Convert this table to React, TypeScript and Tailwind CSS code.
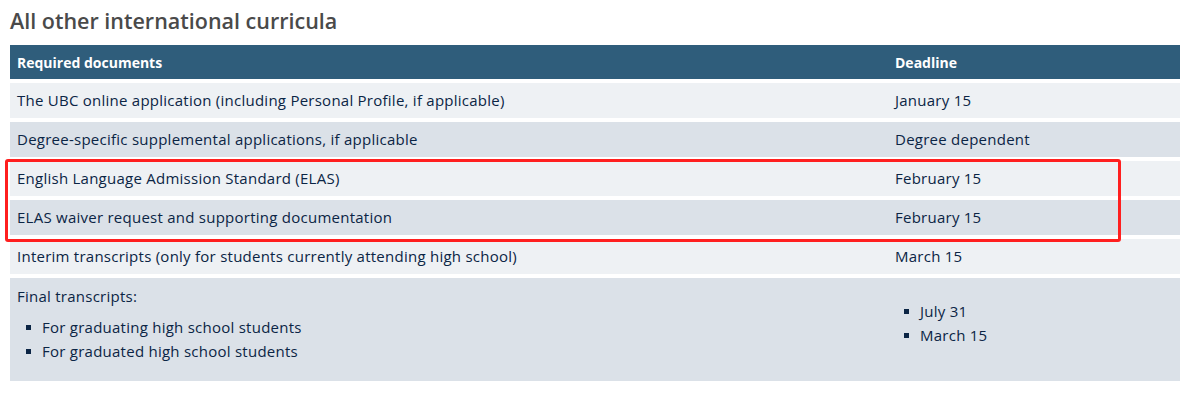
import React from "react";

const rows: { doc: string; deadline: string }[] = [
  { doc: "The UBC online application (including Personal Profile, if applicable)", deadline: "January 15" },
  { doc: "Degree-specific supplemental applications, if applicable", deadline: "Degree dependent" },
  { doc: "English Language Admission Standard (ELAS)", deadline: "February 15" },
  { doc: "ELAS waiver request and supporting documentation", deadline: "February 15" },
  { doc: "Interim transcripts (only for students currently attending high school)", deadline: "March 15" },
];

function Bullet({ children }: { children: React.ReactNode }) {
  return (
    <li className="flex items-center h-6">
      <span className="w-[5px] h-[5px] bg-[#0b2545] ml-[9px] mr-[11px] shrink-0" />
      {children}
    </li>
  );
}

export default function App() {
  return (
    <div className="bg-white w-[1196px] h-[412px] overflow-hidden font-['Open_Sans',sans-serif] text-[#0b2545]">
      <div className="pl-[10px] pr-[16px] pt-[6px] relative">
        <h2 className="text-[21.5px] leading-[30px] font-semibold text-[#4a4a4a] mb-[9px]">All other international curricula</h2>

        <div className="flex flex-col gap-1 w-[1170px]">
          <div className="grid grid-cols-[878px_1fr] h-[34px] items-center bg-[#2f5d7b] text-white text-[14px] font-bold">
            <div className="px-[7px]">Required documents</div>
            <div className="px-[7px]">Deadline</div>
          </div>
          {rows.map((r, i) => (
            <div
              key={r.doc}
              className={`grid grid-cols-[878px_1fr] h-[35px] items-center text-[15px] tracking-[0.25px] ${i % 2 === 0 ? "bg-[#eef1f4]" : "bg-[#dbe1e8]"}`}
            >
              <div className="px-[7px]">{r.doc}</div>
              <div className="px-[7px]">{r.deadline}</div>
            </div>
          ))}
          <div className="grid grid-cols-[878px_1fr] h-[103px] bg-[#dbe1e8] text-[15px] tracking-[0.25px]">
            <div className="px-[7px] pt-[6px]">
              <p className="leading-6">Final transcripts:</p>
              <ul className="mt-[7px]">
                <Bullet>For graduating high school students</Bullet>
                <Bullet>For graduated high school students</Bullet>
              </ul>
            </div>
            <div className="px-[7px] pt-[21px]">
              <ul>
                <Bullet>July 31</Bullet>
                <Bullet>March 15</Bullet>
              </ul>
            </div>
          </div>
        </div>

        <div className="absolute left-[5px] top-[159px] w-[1116px] h-[83px] border-[3px] border-[#ff1f1f] rounded-[3px]" />
      </div>
    </div>
  );
}
